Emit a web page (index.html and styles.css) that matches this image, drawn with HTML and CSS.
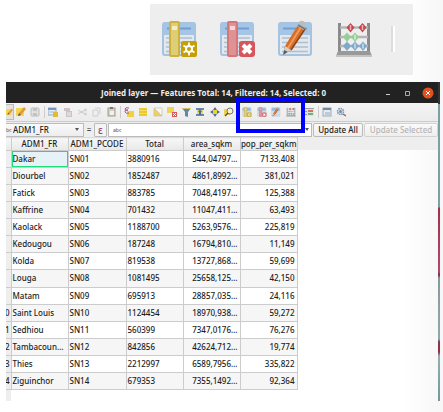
FILE: index.html
```
<!DOCTYPE html>
<html lang="en">
<head>
<meta charset="utf-8">
<title>Joined layer</title>
<link rel="stylesheet" href="styles.css">
</head>
<body>
<svg class="sprite" aria-hidden="true">
  <symbol id="sheet" viewBox="0 0 36 38">
    <rect x="1" y="3" width="32" height="32" rx="2" fill="#e3e8ed" stroke="#a5c3e0" stroke-width="2"/>
    <path d="M1 5q0-2 2-2h28q2 0 2 2v10H1z" fill="#a6c5e5"/>
    <path d="M5 8.500h24" stroke="#6f9fd0" stroke-width="2"/>
    <path d="M4 18h26M4 22.500h26M4 27h26M4 31.500h26" stroke="#b0bfcd" stroke-width="1.500"/>
  </symbol>
  <symbol id="new-field" viewBox="0 0 36 38">
    <use href="#sheet"/>
    <rect x="8" y="2" width="9" height="34" rx="1" fill="#dfce78" stroke="#cfb238" stroke-width="2"/>
    <rect x="10" y="6" width="5" height="4" fill="#f5edc8"/>
    <rect x="19" y="21" width="16" height="16" rx="2" fill="#c49f08"/>
    <path d="M27 22.500v13M21.500 25.500l11 7M32.500 25.500l-11 7" stroke="#fff" stroke-width="1.800"/>
    <circle cx="27" cy="29" r="4" fill="#fff"/><circle cx="27" cy="29" r="2" fill="#c49f08"/>
  </symbol>
  <symbol id="delete-field" viewBox="0 0 36 38">
    <use href="#sheet"/>
    <rect x="8" y="2" width="9" height="34" rx="1" fill="#df9294" stroke="#d8757a" stroke-width="2"/>
    <rect x="10" y="6" width="5" height="4" fill="#f6d5d6"/>
    <rect x="19" y="21" width="16" height="16" rx="3" fill="#d7565c"/>
    <path d="M23 25l8 8M31 25l-8 8" stroke="#fff" stroke-width="4"/>
  </symbol>
  <symbol id="edit-sheet" viewBox="0 0 36 38">
    <use href="#sheet"/>
    <path d="M5 35l2-9 6 4z" fill="#555b5f"/>
    <path d="M7 26L20 5l7 4-14 21z" fill="#d96d26"/>
    <path d="M10 28L23 7" stroke="#f09a5a" stroke-width="2"/>
    <path d="M13 30L27 9" stroke="#8d4315" stroke-width="1.500"/>
    <path d="M7 26l6 4-3 2-4-2z" fill="#d5cfc8"/>
    <path d="M19 6l3-5q4-1 6 3l-2 6z" fill="#b9bdbe"/>
    <path d="M20 5l7 4" stroke="#717678" stroke-width="1.500"/>
  </symbol>
  <symbol id="abacus" viewBox="0 0 36 38">
    <path d="M3.500 3v30M32.500 3v30" stroke="#8a8a8a" stroke-width="3"/>
    <path d="M4 7.500h28M4 17h28M4 26h28" stroke="#b5b5b5" stroke-width="2.500"/>
    <path d="M2 31h32l2 5H0z" fill="#999"/><path d="M0 35h36v2H0z" fill="#c4c4c4"/>
    <g fill="#c9454b"><path d="M14.500 3l4 4.500-4 5-4-5zM26.500 3l4 4.500-4 5-4-5z"/></g>
    <g fill="#95cf95"><path d="M11 12.500l4 4.500-4 5-4-5zM19 12.500l4 4.500-4 5-4-5z"/></g>
    <g fill="#7fa9cc"><path d="M11 21.500l4 4.500-4 5-4-5zM19 21.500l4 4.500-4 5-4-5zM27 21.500l4 4.500-4 5-4-5z"/></g>
    <path d="M14.500 5v5M26.500 5v5M19 14.500v5M19 23.500v5M27 23.500v5" stroke="#fff" stroke-opacity=".6" stroke-width="1.500"/>
  </symbol>
  <symbol id="pencil" viewBox="0 0 10 10"><path d="M0 1h8v8H0z" fill="#f3d64d"/><path d="M2 9l1-3 5-6 2 2-5 6z" fill="#e09a3c"/><path d="M2 9l1-3 2 2z" fill="#6b5a3a"/></symbol>
  <symbol id="save" viewBox="0 0 10 10"><rect x="1" y="1" width="8" height="8" rx="1" fill="#e2e2e2" stroke="#bcbcbc"/><path d="M3 1h4v3H3zM3 6h4v3H3z" fill="#c2c2c2"/></symbol>
  <symbol id="reload" viewBox="0 0 10 10"><rect x="0" y="1" width="8" height="7" fill="#e5ebf0" stroke="#8ba9c6"/><path d="M0 1h8v2H0z" fill="#6d98c2"/><path d="M1 5h6" stroke="#aebdca"/><path d="M5 5h5v5H5z" fill="#e3bb32"/></symbol>
  <symbol id="add-row" viewBox="0 0 10 10"><path d="M1 1h6v3H1zM3 4h6v6H3z" fill="#cbc4c2"/><path d="M4 6h4M4 8h4" stroke="#eee"/></symbol>
  <symbol id="cut" viewBox="0 0 10 10"><path d="M1 3l7 4M1 7l7-4" stroke="#c9c9c9"/><circle cx="8.500" cy="3" r="1" fill="none" stroke="#c9c9c9"/><circle cx="8.500" cy="7" r="1" fill="none" stroke="#c9c9c9"/></symbol>
  <symbol id="copy" viewBox="0 0 10 10"><path d="M2 3h5v6H2zM4 1h5v6" fill="none" stroke="#cecece"/></symbol>
  <symbol id="paste" viewBox="0 0 10 10"><rect x="2" y="1" width="7" height="8" fill="#d5d0c3" stroke="#a29b8d"/><path d="M4 0h3v2H4z" fill="#777"/><path d="M4 4h4v4H4z" fill="#f1f1f1"/></symbol>
  <symbol id="by-expression" viewBox="0 0 10 10"><path d="M3 4h7v6H3z" fill="#f0d141"/><path d="M5 1Q1 0 1 2t3 1Q0 3 1 5t4 1" fill="none" stroke="#a65883"/></symbol>
  <symbol id="all" viewBox="0 0 10 10"><path d="M1 1h8v8H1z" fill="#f3dc6c"/><path d="M1 1h8v2H1zM1 4h8v2H1zM1 7h8v2H1z" fill="#ecc92f"/></symbol>
  <symbol id="invert" viewBox="0 0 10 10"><path d="M1 1h8v8z" fill="#f6f6f6"/><path d="M1 1v8h8z" fill="#f0d25a"/><path d="M1 1h8v8H1zM1 1l8 8" fill="none" stroke="#c6bfa1" stroke-width=".7"/></symbol>
  <symbol id="deselect" viewBox="0 0 10 10"><path d="M0 0h7v6H0z" fill="#f0d254"/><path d="M5 5h5v5H5z" fill="#d8575d"/><path d="M6 6l3 3M9 6L6 9" stroke="#fff"/></symbol>
  <symbol id="filter" viewBox="0 0 10 10"><path d="M1 1h9L7 5v5l-3-1V5z" fill="#5e87ab"/><path d="M1 1h9v1H1z" fill="#d8c36a"/></symbol>
  <symbol id="to-top" viewBox="0 0 10 10"><path d="M1 1h8v2H1zM1 7h8v2H1z" fill="#668cab"/><path d="M2 3h6v4H2z" fill="#ead36c"/><path d="M5 2l2 3H6v3H4V5H3z" fill="#496f96"/></symbol>
  <symbol id="pan" viewBox="0 0 10 10"><path d="M5 0l2 3H3zM5 10L3 7h4zM0 5l3-2v4zM10 5L7 7V3z" fill="#4d7195"/><path d="M3 3h4v4H3z" fill="#f2cf3d"/></symbol>
  <symbol id="zoom-to" viewBox="0 0 10 10"><path d="M0 2h6v6H0z" fill="#f0d24d"/><circle cx="6" cy="4" r="3" fill="#f4efd5" stroke="#777"/><path d="M4 6L1 9" stroke="#555" stroke-width="1.500"/></symbol>
  <symbol id="format" viewBox="0 0 10 10"><path d="M0 1h10v8H0z" fill="#dfe3df"/><path d="M0 1h10v1H0zM0 4h3v1H0zM0 7h3v1H0z" fill="#9aa09d"/><path d="M4 3h5v2H4z" fill="#cf7072"/><path d="M4 6h5v2H4z" fill="#75af77"/></symbol>
  <symbol id="dock" viewBox="0 0 10 10"><rect x="1" y="1" width="8" height="8" fill="#e7eaed" stroke="#9aa9b8"/><path d="M1 1h8v2H1z" fill="#71899f"/><path d="M3 5h5v4H3z" fill="#bbcbd9"/></symbol>
  <symbol id="actions" viewBox="0 0 10 10"><circle cx="4.500" cy="4.500" r="3" fill="#d9e2ea" stroke="#8496a6" stroke-width="1.500" stroke-dasharray="1.500 .8"/><circle cx="4.500" cy="4.500" r="1.500" fill="#6d93b8"/><path d="M7 7l3 2" stroke="#777" stroke-width="1.500"/></symbol>
</svg>

<section class="palette" aria-label="Field tools">
  <button class="tool" aria-label="New field"><svg><use href="#new-field"/></svg></button>
  <button class="tool" aria-label="Delete field"><svg><use href="#delete-field"/></svg></button>
  <button class="tool" aria-label="Edit"><svg><use href="#edit-sheet"/></svg></button>
  <button class="tool" aria-label="Field calculator"><svg><use href="#abacus"/></svg></button>
  <span class="palette-end"></span>
</section>

<main class="window">
  <header class="titlebar">
    <h1>Joined layer — Features Total: 14, Filtered: 14, Selected: 0</h1>
    <div class="controls">
      <button aria-label="Minimize"><svg viewBox="0 0 12 12"><path d="M4 7.500h4" stroke="#ccc"/></svg></button>
      <button aria-label="Maximize"><svg viewBox="0 0 12 12"><path d="M3.500 4.500h4v4h-4z" fill="none" stroke="#aaa"/></svg></button>
      <button aria-label="Close"><svg viewBox="0 0 12 12"><circle cx="6" cy="6" r="5.500" fill="#e2511f"/><path d="M4 4l4 4M8 4L4 8" stroke="#fff"/></svg></button>
    </div>
  </header>

  <div class="toolbar">
    <div class="group edit">
      <button class="active" aria-label="Toggle editing"><svg><use href="#pencil"/></svg></button>
      <button aria-label="Multi edit"><svg><use href="#pencil"/></svg></button>
      <button aria-label="Save"><svg><use href="#save"/></svg></button>
    </div>
    <span class="sep"></span>
    <div class="group clipboard">
      <button aria-label="Reload"><svg><use href="#reload"/></svg></button>
      <button aria-label="Add"><svg><use href="#add-row"/></svg></button>
      <button aria-label="Cut"><svg><use href="#cut"/></svg></button>
      <button aria-label="Copy"><svg><use href="#copy"/></svg></button>
      <button aria-label="Paste"><svg><use href="#paste"/></svg></button>
    </div>
    <span class="sep"></span>
    <div class="group selection">
      <button aria-label="Select by expression"><svg><use href="#by-expression"/></svg></button>
      <button aria-label="Select all"><svg><use href="#all"/></svg></button>
      <button aria-label="Invert"><svg><use href="#invert"/></svg></button>
      <button aria-label="Deselect"><svg><use href="#deselect"/></svg></button>
      <button aria-label="Filter"><svg><use href="#filter"/></svg></button>
      <button aria-label="Move to top"><svg><use href="#to-top"/></svg></button>
      <button aria-label="Pan"><svg><use href="#pan"/></svg></button>
      <button aria-label="Zoom"><svg><use href="#zoom-to"/></svg></button>
    </div>
    <span class="space"></span>
    <div class="group fields">
      <button aria-label="New field"><svg><use href="#new-field"/></svg></button>
      <button aria-label="Delete field"><svg><use href="#delete-field"/></svg></button>
      <button aria-label="Edit"><svg><use href="#edit-sheet"/></svg></button>
      <button aria-label="Field calculator"><svg><use href="#abacus"/></svg></button>
      <span class="highlight"></span>
    </div>
    <span class="space"></span>
    <div class="group single"><button aria-label="Conditional formatting"><svg><use href="#format"/></svg></button></div>
    <span class="sep"></span>
    <div class="group pair">
      <button aria-label="Dock"><svg><use href="#dock"/></svg></button>
      <button aria-label="Actions"><svg><use href="#actions"/></svg></button>
    </div>
  </div>

  <form class="fieldbar">
    <div class="field-pick"><span class="abc">bc</span><select aria-label="Field"><option>ADM1_FR</option></select><span class="arrow"></span></div>
    <span class="equals">=</span>
    <button type="button" class="epsilon" aria-label="Expression">ε</button>
    <div class="expression"><input type="text" placeholder="abc" aria-label="Value"><span class="arrow"></span></div>
    <button type="button" class="update">Update All</button>
    <button type="button" class="update selected" disabled>Update Selected</button>
  </form>

  <div class="content">
    <table>
      <colgroup><col class="c-num"><col class="c-name"><col class="c-code"><col class="c-value"><col class="c-value"><col class="c-value"></colgroup>
      <thead><tr><th></th><th>ADM1_FR</th><th>ADM1_PCODE</th><th>Total</th><th>area_sqkm</th><th><span class="clip">pop_per_sqkm</span></th></tr></thead>
      <tbody>
        <tr><th></th><td class="current">Dakar</td><td>SN01</td><td>3880916</td><td>544,04797…</td><td>7133,408</td></tr>
        <tr><th></th><td>Diourbel</td><td>SN02</td><td>1852487</td><td>4861,8992…</td><td>381,021</td></tr>
        <tr><th></th><td>Fatick</td><td>SN03</td><td>883785</td><td>7048,4197…</td><td>125,388</td></tr>
        <tr><th></th><td>Kaffrine</td><td>SN04</td><td>701432</td><td>11047,411…</td><td>63,493</td></tr>
        <tr><th></th><td>Kaolack</td><td>SN05</td><td>1188700</td><td>5263,9576…</td><td>225,819</td></tr>
        <tr><th></th><td>Kedougou</td><td>SN06</td><td>187248</td><td>16794,810…</td><td>11,149</td></tr>
        <tr><th></th><td>Kolda</td><td>SN07</td><td>819538</td><td>13727,868…</td><td>59,699</td></tr>
        <tr><th></th><td>Louga</td><td>SN08</td><td>1081495</td><td>25658,125…</td><td>42,150</td></tr>
        <tr><th></th><td>Matam</td><td>SN09</td><td>695913</td><td>28857,035…</td><td>24,116</td></tr>
        <tr><th><span class="clip">0</span></th><td>Saint Louis</td><td>SN10</td><td>1124454</td><td>18970,938…</td><td>59,272</td></tr>
        <tr><th><span class="clip">1</span></th><td>Sedhiou</td><td>SN11</td><td>560399</td><td>7347,0176…</td><td>76,276</td></tr>
        <tr><th><span class="clip">2</span></th><td>Tambacoun…</td><td>SN12</td><td>842856</td><td>42624,712…</td><td>19,774</td></tr>
        <tr><th><span class="clip">3</span></th><td>Thies</td><td>SN13</td><td>2212997</td><td>6589,7956…</td><td>335,822</td></tr>
        <tr><th><span class="clip">4</span></th><td>Ziguinchor</td><td>SN14</td><td>679353</td><td>7355,1492…</td><td>92,364</td></tr>
      </tbody>
    </table>
  </div>
</main>
</body>
</html>
```
FILE: styles.css
```
* { box-sizing: border-box; }
body {
  margin: 0;
  padding: 4px 3px 0 6px;
  background: linear-gradient(to left, #f7f7f7, #fff 40px);
  color: #1c1c1c;
  font: 500 8px/10px "Noto Sans", "Open Sans", sans-serif;
}
button, select, input { margin: 0; padding: 0; border: 0; background: none; color: inherit; font: inherit; }
svg { display: block; }
.sprite { position: absolute; width: 0; height: 0; }

.palette {
  display: flex;
  align-items: center;
  gap: 22px;
  margin: 0 27px 7px 144px;
  padding: 16px 12px 17px;
  background: #eee;
}
.tool svg { width: 36px; height: 38px; }
.palette-end { width: 4px; height: 26px; margin-left: -3px; border-left: 2px solid #ddd; border-right: 2px solid #fff; }

.window {
  border-right: 2px solid;
  border-image: linear-gradient(#303234 22px, #7f9fa5 22px, #7f9fa5 125px, #a03050 126px, #b04a68 190px, #703048 193px, #8c979b 196px, #8fa9ae 257px, #903348 260px, #903348 270px, #8fb0b5 274px, #78969b) 0 2 0 0;
}

.titlebar { display: flex; align-items: center; height: 21px; padding: 0 4px 0 95px; background: #222; color: #eee; }
.titlebar h1 { flex: 1; margin: 0; font: 700 8px/10px "Noto Sans", sans-serif; white-space: nowrap; }
.controls { display: flex; gap: 8px; }
.controls svg { width: 12px; height: 12px; }

.toolbar { display: flex; align-items: center; height: 19px; background: linear-gradient(#f4f4f4, #ebebeb); border-bottom: 1px solid #ccc; }
.group { display: flex; align-items: center; }
.group button { display: flex; flex: 1; justify-content: center; }
.group svg { width: 10px; height: 10px; }
.edit { width: 36px; }
.edit .active { flex: 0 0 8px; height: 16px; align-items: center; border: 1px solid #bbb; border-left: 0; background: #e2e2df; overflow: hidden; }
.clipboard { width: 72px; }
.selection { width: 114px; }
.fields { position: relative; width: 58px; }
.single { width: 14px; }
.pair { width: 28px; }
.sep { width: 4px; height: 12px; background: linear-gradient(#ccc, #ccc) center / 1px 100% no-repeat; }
.space { width: 4px; }
.highlight { position: absolute; top: -10px; left: -4px; right: -7px; height: 36px; border: 4px solid #00f; pointer-events: none; }

.fieldbar { display: flex; align-items: center; height: 15px; background: #eee; }
.field-pick { display: flex; align-items: center; width: 78px; height: 14px; padding-right: 4px; border: 1px solid #bbb; border-left: 0; background: linear-gradient(#fafafa, #ededed); }
.abc { width: 7px; font-size: 5px; color: #666; }
.field-pick select { flex: 1; min-width: 0; height: 12px; appearance: none; }
.arrow { border: 2px solid transparent; border-top: 3px solid #555; border-bottom: 0; }
.equals { width: 10px; text-align: center; }
.epsilon { width: 13px; height: 14px; border: 1px solid #bbb; border-radius: 1px; background: #f4f4f4; color: #8b4a78; font-size: 10px; line-height: 10px; }
.expression { display: flex; align-items: center; flex: 1; min-width: 0; height: 14px; margin-left: 1px; padding: 0 2px 0 4px; border: 1px solid #bbb; background: #fff; }
.expression input { flex: 1; min-width: 0; outline: 0; font-size: 5px; }
.expression input::placeholder { color: #666; }
.update { width: 50px; height: 14px; margin-left: 1px; border: 1px solid #bbb; border-radius: 2px; background: linear-gradient(#fafafa, #eee); white-space: nowrap; }
.update.selected { width: 74px; border-color: #d2d2d2; color: #b5b5b5; }

.content { padding-bottom: 11px; background: linear-gradient(#eee 13px, transparent 13px), linear-gradient(to right, #eee 5px, transparent 5px); }
table { width: 291px; height: 253px; border-collapse: collapse; table-layout: fixed; }
.c-num { width: 5px; }
.c-name { width: 57px; }
.c-code { width: 58px; }
.c-value { width: 57px; }
th, td { padding: 0 2px 0 1px; border: 1px solid #ccc; font-weight: 500; text-align: left; white-space: nowrap; }
th { padding: 0; background: #eee; border-left: 0; }
thead th { height: 13px; border-top-color: #ddd; background: linear-gradient(#f7f7f7, #e8e8e8); text-align: center; }
tbody th { padding-right: 1px; }
tbody tr { background: #fff; }
tbody tr:nth-child(even) { background: #f6f6f6; }
td:nth-child(n+5) { text-align: right; }
.clip { display: flex; justify-content: flex-end; overflow: hidden; }
td.current { position: relative; background: #e6f1f8; }
td.current::after { content: ""; position: absolute; inset: 0; border: 1px solid #1fdc7c; }
```
